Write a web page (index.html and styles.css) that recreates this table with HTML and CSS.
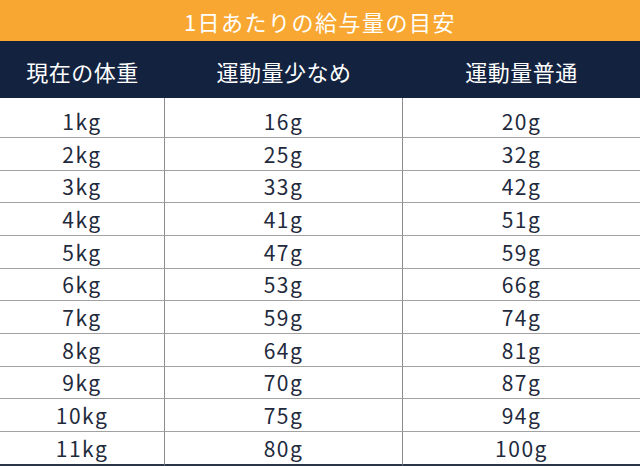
FILE: index.html
```html
<!DOCTYPE html>
<html lang="ja">
<head>
<meta charset="utf-8">
<link rel="stylesheet" href="styles.css">
</head>
<body>
<div class="page">
  <div class="title">1日あたりの給与量の目安</div>
  <div class="head">
    <div class="hcell">現在の体重</div>
    <div class="hcell">運動量少なめ</div>
    <div class="hcell">運動量普通</div>
  </div>
  <div class="grid">
    <div class="cell">1kg</div><div class="cell">16g</div><div class="cell">20g</div>
    <div class="cell">2kg</div><div class="cell">25g</div><div class="cell">32g</div>
    <div class="cell">3kg</div><div class="cell">33g</div><div class="cell">42g</div>
    <div class="cell">4kg</div><div class="cell">41g</div><div class="cell">51g</div>
    <div class="cell">5kg</div><div class="cell">47g</div><div class="cell">59g</div>
    <div class="cell">6kg</div><div class="cell">53g</div><div class="cell">66g</div>
    <div class="cell">7kg</div><div class="cell">59g</div><div class="cell">74g</div>
    <div class="cell">8kg</div><div class="cell">64g</div><div class="cell">81g</div>
    <div class="cell">9kg</div><div class="cell">70g</div><div class="cell">87g</div>
    <div class="cell">10kg</div><div class="cell">75g</div><div class="cell">94g</div>
    <div class="cell">11kg</div><div class="cell">80g</div><div class="cell">100g</div>
  </div>
</div>
</body>
</html>
```

FILE: styles.css
```css
html, body {
  margin: 0;
  padding: 0;
  background: #ffffff;
}
.page {
  width: 640px;
  height: 466px;
  overflow: hidden;
  font-family: "Noto Sans CJK JP", "Noto Sans", sans-serif;
}
.title {
  height: 41px;
  background: #f8a832;
  color: #ffffff;
  font-size: 22px;
  letter-spacing: 1.5px;
  display: flex;
  align-items: center;
  justify-content: center;
  line-height: 1;
}
.head {
  height: 57px;
  background: #13233f;
  display: grid;
  grid-template-columns: 165px 238px 237px;
}
.hcell {
  color: #ffffff;
  font-size: 22px;
  letter-spacing: 0.5px;
  display: flex;
  align-items: center;
  justify-content: center;
  padding-top: 3px;
}
.grid {
  display: grid;
  grid-template-columns: 165px 238px 237px;
  grid-template-rows: 40px repeat(9, 32.67px) 34px;
}
.cell {
  box-sizing: border-box;
  border-bottom: 1px solid #a2a2a2;
  border-right: 1px solid #8c8c8c;
  display: flex;
  align-items: center;
  justify-content: center;
  color: #1f2a3d;
  font-size: 21px;
  letter-spacing: 1.5px;
}
.cell:nth-child(3n) {
  border-right: none;
}
.cell:nth-child(-n+3) {
  padding-top: 7px;
}
.cell:nth-last-child(-n+3) {
  border-bottom: 2px solid #2a3648;
}
```
